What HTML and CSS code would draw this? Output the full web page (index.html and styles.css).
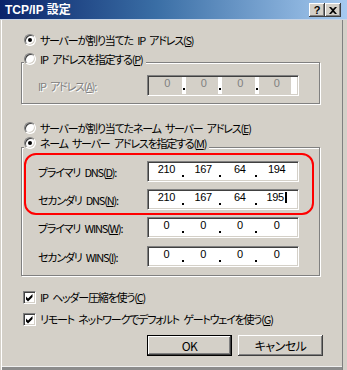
FILE: index.html
```html
<!DOCTYPE html>
<html lang="ja">
<head>
<meta charset="utf-8">
<title>TCP/IP 設定</title>
<link rel="stylesheet" href="styles.css">
</head>
<body>
<div class="window">
  <div class="titlebar">
    <span class="title">TCP/IP 設定</span>
    <div class="tbtns">
      <span class="tbtn help">?</span>
      <span class="tbtn close"><svg width="8" height="7" viewBox="0 0 8 7"><path d="M0 0h2l2 2 2-2h2L5 3.5 8 7H6L4 5 2 7H0l3-3.5z" fill="#000"/></svg></span>
    </div>
  </div>
  <div class="frame">
    <div class="opt row-first"><span class="radio on"></span><span>サーバーが割り当てた IP アドレス(<u>S</u>)</span></div>

    <div class="group g1">
      <div class="caption opt"><span class="radio"></span><span>IP アドレスを指定する(<u>P</u>)</span></div>
      <div class="field field-g1">
        <span class="flabel disabled-text">IP アドレス(<u>A</u>):</span>
        <div class="ip disabled"><span class="oct">0</span><span class="oct">0</span><span class="oct">0</span><span class="oct">0</span></div>
      </div>
    </div>

    <div class="opt row-third"><span class="radio"></span><span>サーバーが割り当てたネーム サーバー アドレス(<u>E</u>)</span></div>

    <div class="group g2">
      <div class="caption opt"><span class="radio on"></span><span>ネーム サーバー アドレスを指定する(<u>M</u>)</span></div>
      <div class="highlight">
        <div class="field">
          <span class="flabel">プライマリ DNS(<u>D</u>):</span>
          <div class="ip"><span class="oct">210</span><span class="oct">167</span><span class="oct">64</span><span class="oct">194</span></div>
        </div>
        <div class="field">
          <span class="flabel">セカンダリ DNS(<u>N</u>):</span>
          <div class="ip"><span class="oct">210</span><span class="oct">167</span><span class="oct">64</span><span class="oct">195<i class="caret"></i></span></div>
        </div>
      </div>
      <div class="wins">
        <div class="field">
          <span class="flabel">プライマリ WINS(<u>W</u>):</span>
          <div class="ip"><span class="oct">0</span><span class="oct">0</span><span class="oct">0</span><span class="oct">0</span></div>
        </div>
        <div class="field">
          <span class="flabel">セカンダリ WINS(<u>I</u>):</span>
          <div class="ip"><span class="oct">0</span><span class="oct">0</span><span class="oct">0</span><span class="oct">0</span></div>
        </div>
      </div>
    </div>

    <div class="opt check-first"><span class="chk"><svg width="9" height="9" viewBox="0 0 9 9"><path d="M1 3.5 3 5.5 7.5 1v3L3 8.5 1 6.5z" fill="#000"/></svg></span><span>IP ヘッダー圧縮を使う(<u>C</u>)</span></div>
    <div class="opt check-second"><span class="chk"><svg width="9" height="9" viewBox="0 0 9 9"><path d="M1 3.5 3 5.5 7.5 1v3L3 8.5 1 6.5z" fill="#000"/></svg></span><span>リモート ネットワークでデフォルト ゲートウェイを使う(<u>G</u>)</span></div>

    <div class="buttons">
      <span class="btn default">OK</span>
      <span class="btn">キャンセル</span>
    </div>
  </div>
</div>
</body>
</html>
```

FILE: styles.css
```css
* { box-sizing: border-box; }
html, body { margin: 0; padding: 0; }
body {
  width: 347px;
  height: 370px;
  overflow: hidden;
  background: #d4d0c8;
  color: #000;
  font-family: "Noto Sans CJK JP", sans-serif;
  font-size: 11px;
  letter-spacing: -1.2px;
  word-spacing: 3px;
  font-feature-settings: "palt";
}
u { text-decoration: underline; text-underline-offset: 1px; }

.window {
  width: 347px;
  height: 370px;
  display: flex;
  flex-direction: column;
}

.titlebar {
  flex: none;
  height: 20px;
  display: flex;
  align-items: center;
  padding-left: 5px;
  background: linear-gradient(to right, #0a246a 0%, #3a6ea5 45%, #a6caf0 100%);
  box-shadow: inset 0 -1px 0 #c8d4e4;
}
.title {
  flex: 1;
  color: #fff;
  font-family: "Liberation Sans", "Noto Sans CJK JP", sans-serif;
  font-weight: bold;
  font-size: 12px;
  letter-spacing: 0;
  word-spacing: 0;
  line-height: 14px;
}
.tbtns { display: flex; margin-right: 6px; }
.tbtn {
  width: 16px;
  height: 14px;
  display: flex;
  align-items: center;
  justify-content: center;
  background: #d4d0c8;
  box-shadow: inset -1px -1px 0 #404040, inset 1px 1px 0 #fff, inset -2px -2px 0 #808080;
  font-family: "Liberation Sans", sans-serif;
  font-weight: bold;
  font-size: 11px;
  letter-spacing: 0;
  line-height: 12px;
}

.frame {
  flex: 1;
  padding-left: 21px;
  box-shadow: inset 1px 0 0 #d4d0c8, inset 2px 0 0 #fff,
              inset -4px 0 0 #d4d0c8, inset -5px 0 0 #808080,
              inset 0 -3px 0 #8c8c8c, inset 0 -4px 0 #f0f0f0;
}

.opt {
  display: flex;
  align-items: center;
  height: 14px;
  line-height: 14px;
  white-space: nowrap;
}
.opt .radio { margin-left: 3px; margin-right: 4px; }

.radio {
  position: relative;
  flex: none;
  width: 12px;
  height: 12px;
  border-radius: 50%;
  background: #fff;
  border: 1px solid;
  border-color: #808080 #fff #fff #808080;
  box-shadow: inset 1px 1px 0 #404040, inset -1px -1px 0 #d4d0c8;
}
.radio.on::after {
  content: "";
  position: absolute;
  left: 3px;
  top: 3px;
  width: 4px;
  height: 4px;
  border-radius: 50%;
  background: #000;
}

.chk {
  flex: none;
  width: 13px;
  height: 13px;
  margin-left: 2px;
  margin-right: 4px;
  display: flex;
  align-items: center;
  justify-content: center;
  background: #fff;
  border: 1px solid;
  border-color: #808080 #fff #fff #808080;
  box-shadow: inset 1px 1px 0 #404040, inset -1px -1px 0 #d4d0c8;
}

.row-first { margin-top: 13px; }
.row-third { margin-top: 17px; }
.check-first { margin-top: 14px; }
.check-second { margin-top: 8px; }

.group {
  position: relative;
  width: 299px;
  border: 1px solid #808080;
  box-shadow: inset 1px 1px 0 #fff, 1px 1px 0 #fff;
}
.caption {
  position: absolute;
  left: 2px;
  background: #d4d0c8;
  padding-right: 3px;
}
.caption .radio { margin-left: 0; }
.g1 { margin-top: 15px; height: 42px; padding-top: 12px; }
.g1 .caption { top: -11px; }
.field-g1 { padding-left: 16px; }

.g2 { margin-top: 12px; height: 129px; padding-top: 5px; }
.g2 .caption { top: -12px; }

.highlight {
  margin-left: 2px;
  width: 290px;
  border: 2px solid #f00;
  border-radius: 12px;
  padding: 6px 0 3px 12px;
  display: flex;
  flex-direction: column;
  gap: 7px;
}
.wins {
  margin-top: 2px;
  padding-left: 16px;
  display: flex;
  flex-direction: column;
  gap: 8px;
}

.field { display: flex; align-items: center; white-space: nowrap; }
.flabel { width: 109px; flex: none; }
.disabled-text { color: #808080; text-shadow: 1px 1px 0 #fff; }

.ip {
  display: grid;
  grid-template-columns: repeat(4, 1fr);
  width: 152px;
  height: 21px;
  padding-right: 3px;
  background: #fff;
  border: 1px solid;
  border-color: #808080 #fff #fff #808080;
  box-shadow: inset 1px 1px 0 #404040, inset -1px -1px 0 #d4d0c8;
  font-family: "Liberation Sans", sans-serif;
  font-size: 11px;
  letter-spacing: -0.3px;
  word-spacing: 0;
}
.oct {
  position: relative;
  text-align: center;
  padding-top: 1px;
  line-height: 13px;
}
.oct:not(:last-child)::after {
  content: "";
  position: absolute;
  right: 1px;
  bottom: 4px;
  width: 2px;
  height: 2px;
  background: #000;
}
.ip.disabled .oct {
  color: #808080;
  background: linear-gradient(to right, #d4d0c8 calc(100% - 4px), #fff 0);
  margin: 1px 0;
  padding-top: 0;
}
.ip.disabled { padding-left: 1px; }
.caret {
  display: inline-block;
  width: 2px;
  height: 11px;
  margin-left: 1px;
  vertical-align: -2px;
  background: #000;
}

.buttons {
  margin-top: 9px;
  margin-left: 126px;
  display: flex;
  gap: 6px;
}
.btn {
  width: 85px;
  height: 21px;
  display: flex;
  align-items: center;
  justify-content: center;
  background: #d4d0c8;
  font-size: 12px;
  letter-spacing: -0.5px;
  box-shadow: inset -1px -1px 0 #404040, inset 1px 1px 0 #fff, inset -2px -2px 0 #808080;
}
.btn.default {
  border: 1px solid #000;
}
```
